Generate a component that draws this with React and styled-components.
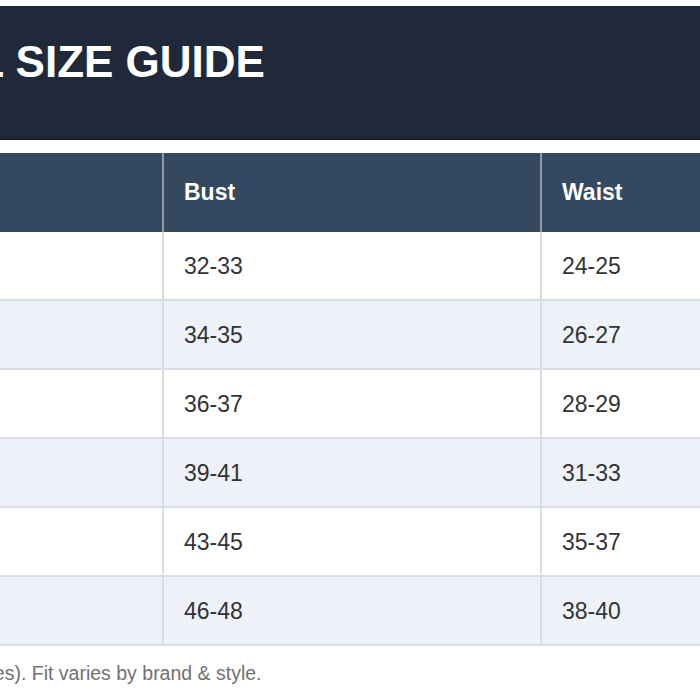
import React from 'react';
import styled, { createGlobalStyle } from 'styled-components';

const GlobalStyle = createGlobalStyle`
  body {
    margin: 0;
    background: #ffffff;
    font-family: "Liberation Sans", Arial, sans-serif;
  }
`;

const Viewport = styled.div`
  width: 700px;
  height: 700px;
  overflow: hidden;
`;

const Page = styled.div`
  width: 1160px;
  margin-left: -240px;
  padding-top: 6px;
`;

const TitleBar = styled.header`
  height: 134px;
  box-sizing: border-box;
  background: #1f2939;
  padding: 31px 0 0 29px;
  border-bottom: 2px solid #18202c;
`;

const Title = styled.h1`
  margin: 0;
  color: #ffffff;
  font-size: 44px;
  font-weight: 700;
`;

const Table = styled.table`
  margin-top: 13px;
  border-collapse: collapse;
  table-layout: fixed;
  width: 1160px;
`;

const HeadCell = styled.th`
  height: 79px;
  background: #34495f;
  color: #ffffff;
  font-size: 23px;
  font-weight: 700;
  text-align: left;
  padding: 0 0 0 20px;
  border-left: 2px solid #8d9aaa;
  &:first-child {
    border-left: 0;
  }
`;

const Row = styled.tr`
  background: ${(p) => (p.$alt ? '#eef1f8' : '#ffffff')};
  border-bottom: 2px solid #d9dee6;
`;

const Cell = styled.td`
  height: 65px;
  padding: 2px 0 0 20px;
  color: #333333;
  font-size: 23px;
  border-left: 2px solid #d9dee6;
  &:first-child {
    border-left: 0;
  }
`;

const Note = styled.p`
  margin: 16px 0 0;
  padding-left: 29px;
  color: #727272;
  font-size: 19.5px;
`;

const rows = [
  ['XS', '32-33', '24-25', '34-35'],
  ['S', '34-35', '26-27', '36-37'],
  ['M', '36-37', '28-29', '38-39'],
  ['L', '39-41', '31-33', '41-43'],
  ['XL', '43-45', '35-37', '45-47'],
  ['XXL', '46-48', '38-40', '48-50'],
];

export default function App() {
  return (
    <Viewport>
      <GlobalStyle />
      <Page>
        <TitleBar>
          <Title>GENERAL SIZE GUIDE</Title>
        </TitleBar>
        <Table>
          <colgroup>
            <col style={{ width: 403 }} />
            <col style={{ width: 378 }} />
            <col style={{ width: 378 }} />
            <col />
          </colgroup>
          <thead>
            <tr>
              <HeadCell>Size</HeadCell>
              <HeadCell>Bust</HeadCell>
              <HeadCell>Waist</HeadCell>
              <HeadCell>Hips</HeadCell>
            </tr>
          </thead>
          <tbody>
            {rows.map((r, i) => (
              <Row key={r[0]} $alt={i % 2 === 1}>
                {r.map((v, j) => (
                  <Cell key={j}>{v}</Cell>
                ))}
              </Row>
            ))}
          </tbody>
        </Table>
        <Note>All sizes in inches (ranges). Fit varies by brand &amp; style.</Note>
      </Page>
    </Viewport>
  );
}
